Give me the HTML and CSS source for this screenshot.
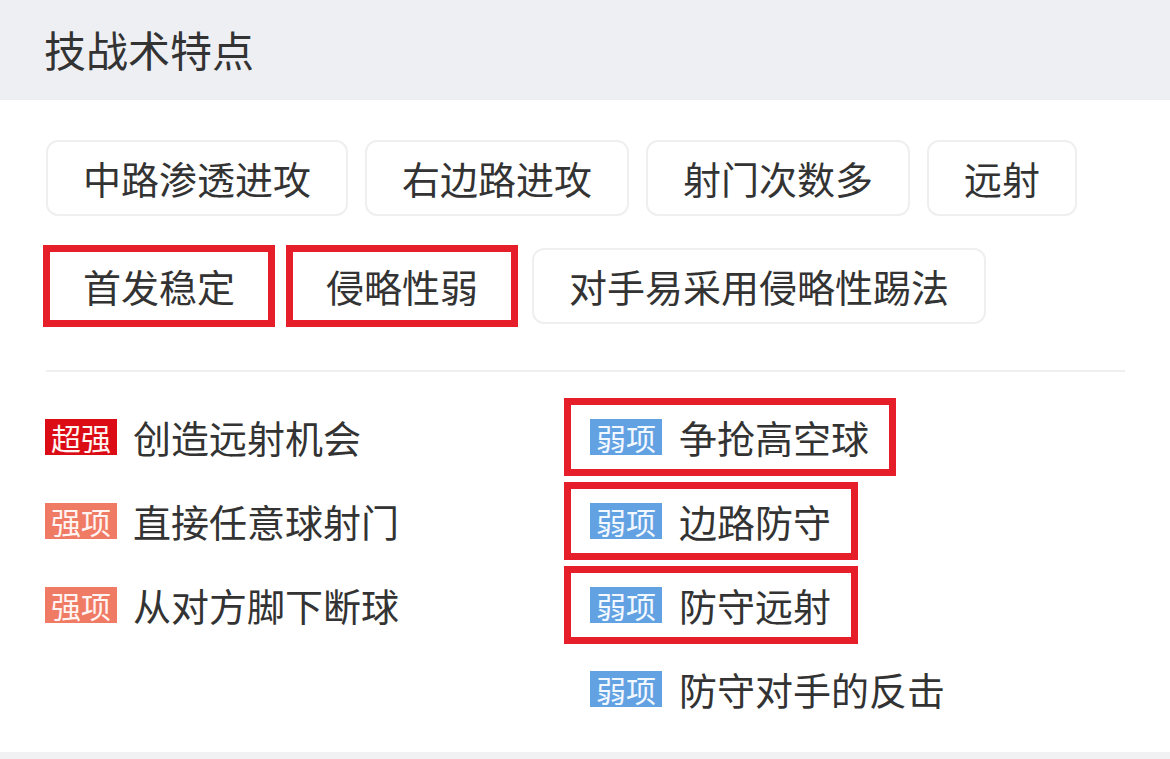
FILE: index.html
```html
<!DOCTYPE html>
<html lang="zh-CN">
<head>
<meta charset="utf-8">
<title>技战术特点</title>
<link rel="stylesheet" href="styles.css">
</head>
<body>
<div class="page">
  <header class="head">
    <h1 class="title">技战术特点</h1>
  </header>
  <section class="tags">
    <span class="tag">中路渗透进攻</span>
    <span class="tag">右边路进攻</span>
    <span class="tag">射门次数多</span>
    <span class="tag">远射</span>
    <span class="tag marked">首发稳定</span>
    <span class="tag marked">侵略性弱</span>
    <span class="tag">对手易采用侵略性踢法</span>
  </section>
  <div class="divider"></div>
  <section class="traits">
    <div class="col">
      <div class="item"><span class="badge super">超强</span><span class="text">创造远射机会</span></div>
      <div class="item"><span class="badge strong">强项</span><span class="text">直接任意球射门</span></div>
      <div class="item"><span class="badge strong">强项</span><span class="text">从对方脚下断球</span></div>
    </div>
    <div class="col right">
      <div class="item marked"><span class="badge weak">弱项</span><span class="text">争抢高空球</span></div>
      <div class="item marked"><span class="badge weak">弱项</span><span class="text">边路防守</span></div>
      <div class="item marked"><span class="badge weak">弱项</span><span class="text">防守远射</span></div>
      <div class="item"><span class="badge weak">弱项</span><span class="text">防守对手的反击</span></div>
    </div>
  </section>
  <div class="foot"></div>
</div>
</body>
</html>
```

FILE: styles.css
```css
* { box-sizing: border-box; }
html, body { margin: 0; padding: 0; background: #ffffff; }
body {
  font-family: "Noto Sans CJK SC", "Noto Sans", sans-serif;
  color: #333333;
}
.page { width: 1170px; height: 759px; overflow: hidden; display: flex; flex-direction: column; }
.head {
  height: 100px;
  background: #eeeff3;
  display: flex;
  align-items: center;
  padding: 0 0 0 44px;
}
.title {
  margin: 0;
  font-size: 42px;
  font-weight: 400;
  line-height: 1;
  color: #333333;
  padding-bottom: 2px;
}
.tags {
  display: flex;
  flex-wrap: wrap;
  column-gap: 17px;
  row-gap: 32px;
  padding: 40px 45px 0 46px;
}
.tag {
  height: 76px;
  display: inline-flex;
  align-items: center;
  padding: 0 35px;
  border: 2px solid #efefef;
  border-radius: 12px;
  font-size: 38px;
  line-height: 1;
  color: #333333;
}
.tag.marked {
  outline: 7px solid #e61e2a;
  outline-offset: -4px;
  border-radius: 0;
}
.divider {
  height: 2px;
  background: #efefef;
  margin: 46px 45px 0 46px;
}
.traits {
  flex: 1;
  display: grid;
  grid-template-columns: 519px 1fr;
  padding: 23px 45px 0 45px;
}
.col { display: flex; flex-direction: column; }
.item {
  height: 84px;
  display: flex;
  align-items: center;
  gap: 16px;
}
.col.right .item {
  align-self: flex-start;
  height: 78px;
  margin: 3px 0;
  padding: 0 27px 0 26px;
  gap: 17px;
}
.col.right .item.marked {
  outline: 7px solid #e61e2a;
  outline-offset: -7px;
}
.badge {
  width: 72px;
  height: 36px;
  display: inline-flex;
  align-items: center;
  justify-content: center;
  font-size: 30px;
  line-height: 1;
  color: #fff4f2;
  flex: none;
}
.badge.super { background: #dc0c16; }
.badge.strong { background: #f07b65; }
.badge.weak { background: #62a1e2; color: #f2f8ff; }
.text {
  font-size: 38px;
  line-height: 1;
  color: #333333;
  white-space: nowrap;
}
.foot { height: 7px; background: #f1f1f3; }
```
